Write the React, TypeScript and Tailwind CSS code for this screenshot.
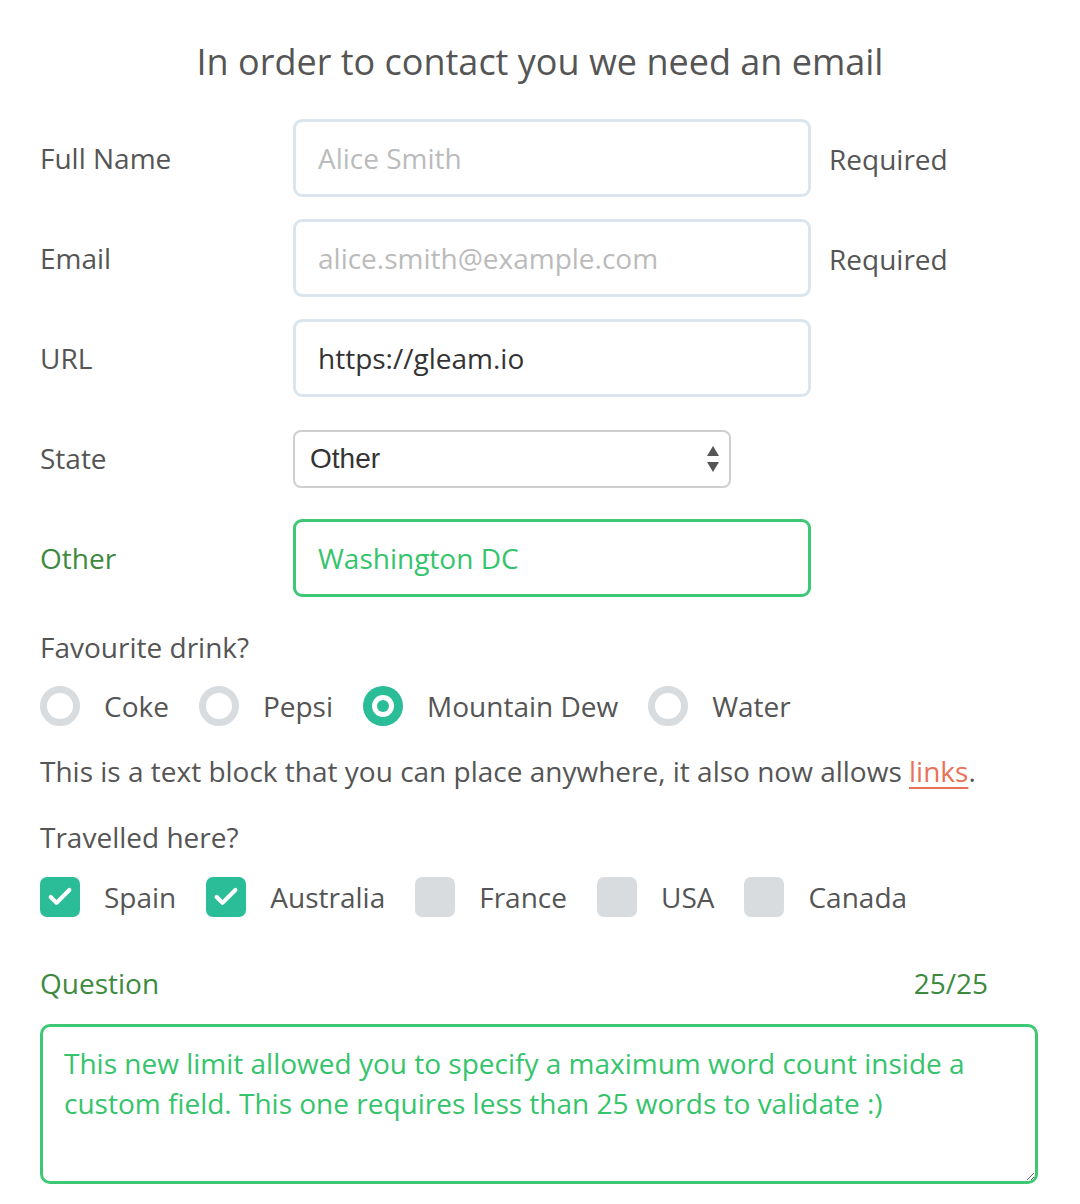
import { Check } from "lucide-react";

// ─── Data ────────────────────────────────────────────────────────────────────
const DRINKS = [
  { label: "Coke", checked: false },
  { label: "Pepsi", checked: false },
  { label: "Mountain Dew", checked: true },
  { label: "Water", checked: false },
];

const COUNTRIES = [
  { label: "Spain", checked: true },
  { label: "Australia", checked: true },
  { label: "France", checked: false },
  { label: "USA", checked: false },
  { label: "Canada", checked: false },
];

const TEXT_INPUTS = [
  { label: "Full Name", placeholder: "Alice Smith", value: "", required: true },
  { label: "Email", placeholder: "alice.smith@example.com", value: "", required: true },
  { label: "URL", placeholder: "", value: "https://gleam.io", required: false },
];

// ─── Main ────────────────────────────────────────────────────────────────────
export default function App() {
  return (
    <div
      className="w-[1080px] min-h-[1204px] bg-white px-10 pt-[36px] text-[28px] text-[#555]"
      style={{ fontFamily: '"Open Sans", "Liberation Sans", sans-serif' }}
    >
      <h1 className="text-center text-[36px] leading-[52px] text-[#555]">
        In order to contact you we need an email
      </h1>

      <div className="mt-[31px] flex flex-col gap-[22px]">
        {TEXT_INPUTS.map((f) => (
          <Row key={f.label} label={f.label}>
            <input
              readOnly
              value={f.value}
              placeholder={f.placeholder}
              className="h-[78px] w-[518px] rounded-[9px] border-[3px] border-[#dce5ee] bg-white px-[22px] text-[28px] text-[#333] outline-none placeholder:text-[#bbb]"
            />
            {f.required && <span className="ml-[18px] mt-[2px] text-[#555]">Required</span>}
          </Row>
        ))}

        <Row label="State">
          <div className="relative mt-[2px] flex h-[58px] w-[438px] items-center rounded-[8px] border-2 border-[#cfcfcf] bg-white pl-[15px]">
            <span
              className="text-[28px] text-[#333]"
              style={{ fontFamily: '"Liberation Sans", Arial, sans-serif' }}
            >
              Other
            </span>
            <svg
              width="14"
              height="28"
              viewBox="0 0 14 28"
              className="absolute right-[9px] top-[13px]"
            >
              <path d="M7 1 L13 11 L1 11 Z" fill="#555" />
              <path d="M1 17 L13 17 L7 27 Z" fill="#555" />
            </svg>
          </div>
        </Row>

        <Row label="Other" labelClass="text-[#3d8a3f]">
          <input
            readOnly
            value="Washington DC"
            className="h-[78px] w-[518px] rounded-[9px] border-[3px] border-[#3ec875] bg-white px-[22px] text-[28px] text-[#35c46c] outline-none"
          />
        </Row>
      </div>

      {/* Favourite drink */}
      <div className="mt-[30px] leading-[40px]">Favourite drink?</div>
      <div className="mt-[19px] flex items-center gap-[30px]">
        {DRINKS.map((d) => (
          <label key={d.label} className="flex items-center gap-[24px]">
            <Radio checked={d.checked} />
            <span className="leading-[40px]">{d.label}</span>
          </label>
        ))}
      </div>

      <p className="mt-[25px] leading-[40px]">
        This is a text block that you can place anywhere, it also now allows{" "}
        <a href="#" className="text-[#e8735a] underline underline-offset-[5px]">
          links
        </a>
        .
      </p>

      {/* Travelled */}
      <div className="mt-[26px] leading-[40px]">Travelled here?</div>
      <div className="mt-[20px] flex items-center gap-[30px]">
        {COUNTRIES.map((c) => (
          <label key={c.label} className="flex items-center gap-[24px]">
            <Box checked={c.checked} />
            <span className="leading-[40px]">{c.label}</span>
          </label>
        ))}
      </div>

      {/* Question */}
      <div className="mt-[46px] flex w-[948px] items-center justify-between leading-[40px] text-[#3d8a3f]">
        <span>Question</span>
        <span>25/25</span>
      </div>
      <textarea
        readOnly
        className="mt-[21px] block h-[160px] w-[998px] resize rounded-[10px] border-[3px] border-[#3ec875] bg-white px-[21px] pt-[16px] text-[28px] leading-[40px] text-[#35c46c] outline-none"
        value="This new limit allowed you to specify a maximum word count inside a custom field. This one requires less than 25 words to validate :)"
      />
    </div>
  );
}

// ─── Pieces ──────────────────────────────────────────────────────────────────
function Row({
  label,
  labelClass = "text-[#555]",
  children,
}: {
  label: string;
  labelClass?: string;
  children: React.ReactNode;
}) {
  return (
    <div className="flex h-[78px] items-center">
      <span className={`w-[253px] shrink-0 ${labelClass}`}>{label}</span>
      {children}
    </div>
  );
}

function Radio({ checked }: { checked: boolean }) {
  if (checked) {
    return (
      <span className="flex h-[40px] w-[40px] items-center justify-center rounded-full bg-[#2bbd97]">
        <span className="flex h-[22px] w-[22px] items-center justify-center rounded-full bg-white">
          <span className="h-[12px] w-[12px] rounded-full bg-[#2bbd97]" />
        </span>
      </span>
    );
  }
  return <span className="h-[40px] w-[40px] rounded-full border-[7px] border-[#d8dcdf] bg-white" />;
}

function Box({ checked }: { checked: boolean }) {
  return (
    <span
      className={`flex h-[40px] w-[40px] items-center justify-center rounded-[7px] ${
        checked ? "bg-[#2bbd97]" : "bg-[#d8dcdf]"
      }`}
    >
      {checked && <Check size={28} strokeWidth={3.5} color="#fff" />}
    </span>
  );
}
